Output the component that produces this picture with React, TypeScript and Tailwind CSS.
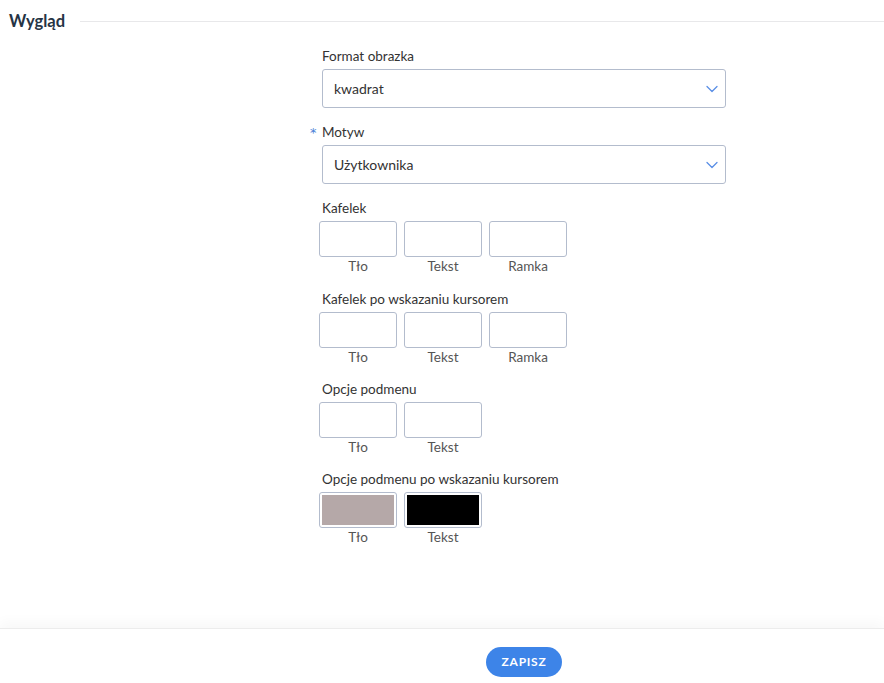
import React from "react";

const font = { fontFamily: "Lato, 'Open Sans', sans-serif" };

function Chevron() {
  return (
    <svg width="12" height="8" viewBox="0 0 12 8" fill="none" className="shrink-0">
      <path d="M1 1.5l5 5 5-5" stroke="#5b8fe6" strokeWidth="1.3" strokeLinecap="round" strokeLinejoin="round" />
    </svg>
  );
}

function Select({ value }: { value: string }) {
  return (
    <div className="flex h-[39px] w-[404px] items-center justify-between rounded-[3px] border border-[#b3bccd] bg-white pl-[11px] pr-[7px] text-[14px] text-[#333]">
      <span>{value}</span>
      <Chevron />
    </div>
  );
}

type Swatch = { label: string; color?: string };

function SwatchGroup({ title, items, className = "" }: { title: string; items: Swatch[]; className?: string }) {
  return (
    <div className={"flex flex-col " + className}>
      <div className="h-[18px] text-[13.5px] leading-[18px] text-[#333]">{title}</div>
      <div className="-ml-[3px] mt-[4px] flex gap-[7px]">
        {items.map((s) => (
          <div key={s.label} className="flex w-[78px] flex-col items-center">
            <div className="h-[36px] w-[78px] rounded-[3px] border border-[#b3bccd] bg-white p-[2px]">
              {s.color && <div className="h-full w-full" style={{ background: s.color }} />}
            </div>
            <div className="h-[18px] text-[13.5px] leading-[18px] text-[#555]">{s.label}</div>
          </div>
        ))}
      </div>
    </div>
  );
}

export default function App() {
  return (
    <div className="flex min-h-screen flex-col bg-white" style={font}>
      {/* Section header */}
      <div className="flex h-[42px] items-center pl-[9px]">
        <span className="text-[16.5px] font-bold text-[#263445]">Wygląd</span>
        <div className="ml-[15px] h-px flex-1 bg-[#e8e8ea]" />
      </div>

      {/* Form */}
      <div className="flex-1 pt-[5px]">
        <div className="ml-[322px] flex w-[404px] flex-col">
          <div className="h-[18px] text-[13.5px] leading-[18px] text-[#333]">Format obrazka</div>
          <div className="mt-[4px]">
            <Select value="kwadrat" />
          </div>

          <div className="relative mt-[15px] h-[18px] text-[13.5px] leading-[18px] text-[#333]">
            <span className="absolute -left-[12px] top-[1px] font-['DejaVu_Sans',sans-serif] text-[13px] leading-[18px] text-[#4a7fd6]">
              *
            </span>
            Motyw
          </div>
          <div className="mt-[4px]">
            <Select value="Użytkownika" />
          </div>

          <div className="mt-[15px] flex flex-col gap-[14px]">
            <SwatchGroup title="Kafelek" items={[{ label: "Tło" }, { label: "Tekst" }, { label: "Ramka" }]} />
            <SwatchGroup
              className="mt-[1px]"
              title="Kafelek po wskazaniu kursorem"
              items={[{ label: "Tło" }, { label: "Tekst" }, { label: "Ramka" }]}
            />
            <SwatchGroup title="Opcje podmenu" items={[{ label: "Tło" }, { label: "Tekst" }]} />
            <SwatchGroup
              title="Opcje podmenu po wskazaniu kursorem"
              items={[
                { label: "Tło", color: "#b5a8a8" },
                { label: "Tekst", color: "#000000" },
              ]}
            />
          </div>
        </div>
      </div>

      {/* Footer */}
      <div className="h-[55px] border-t border-[#ececec] pt-[18px] shadow-[0_-6px_12px_rgba(0,0,0,0.03)]">
        <div className="ml-[322px] flex w-[404px] justify-center">
          <button className="h-[30px] w-[76px] rounded-full bg-[#3d84e8] text-[12px] font-bold tracking-[0.06em] text-white">
            ZAPISZ
          </button>
        </div>
      </div>
    </div>
  );
}
